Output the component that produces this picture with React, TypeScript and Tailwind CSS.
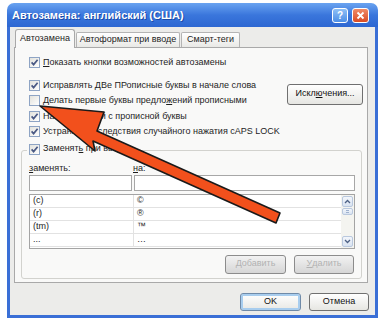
import React from 'react';

function Box({ checked = true }: { checked?: boolean }) {
  return (
    <span className="w-[11px] h-[11px] shrink-0 border border-[#8ea4c4] bg-linear-to-br from-[#e2e2dc] to-white flex items-center justify-center">
      {checked && (
        <svg width="9" height="9" viewBox="0 0 9 9">
          <path d="M1.6 4.4 L3.6 6.6 L7.6 1.8" fill="none" stroke="#4a5984" strokeWidth="1.7" />
        </svg>
      )}
    </span>
  );
}

function Row({ children, checked = true }: { children: React.ReactNode; checked?: boolean }) {
  return (
    <div className="h-[15.5px] flex items-center gap-[3px] pl-[8px]">
      <Box checked={checked} />
      <span className="whitespace-nowrap">{children}</span>
    </div>
  );
}

function Btn({ children, w, disabled = false, def = false, h = 'h-[19px]' }: { children: React.ReactNode; w: string; disabled?: boolean; def?: boolean; h?: string }) {
  return (
    <div
      className={`${w} ${h} shrink-0 rounded-[3px] border flex items-center justify-center ${
        disabled
          ? 'border-[#8c8c8c] bg-linear-to-b from-[#f2f2f2] to-[#d6d6d6] text-[#b2b2b2]'
          : def
          ? 'border-[#6f8aa8] bg-linear-to-b from-white to-[#e8e8e4] text-[#111] shadow-[inset_0_0_0_2px_#a8cdee]'
          : 'border-[#707070] bg-linear-to-b from-white to-[#e6e6e2] text-[#111]'
      }`}
    >
      {children}
    </div>
  );
}

const rows: [string, string][] = [
  ['(c)', '©'],
  ['(r)', '®'],
  ['(tm)', '™'],
  ['...', '…'],
];

function Arrow() {
  return (
    <svg className="absolute top-0 left-0 pointer-events-none" width="384" height="320" viewBox="0 0 384 320">
      <polygon
        points="40,106 104,112 97,131 280,213 276,223 93,141 95,151"
        fill="#f2501c"
        stroke="#1a1a1a"
        strokeWidth="1.6"
        strokeLinejoin="round"
      />
    </svg>
  );
}

export default function App() {
  return (
    <div className="w-[384px] h-[320px] bg-white relative overflow-hidden font-['Liberation_Sans',Arial,sans-serif] text-[9px] text-[#1e1e1e]">
      <div className="ml-[7px] mt-[3px] w-[371px] h-[315px] flex flex-col">
        {/* заголовок окна */}
        <div className="h-[24px] rounded-t-[7px] bg-linear-to-b from-[#6aa3f0] via-[#3a76dc] to-[#2d67d2] flex items-center justify-between pl-[5px] pr-[9px]">
          <span className="text-white font-bold text-[11px] [text-shadow:1px_1px_0_#1b4aa8]">Автозамена: английский (США)</span>
          <div className="flex items-center gap-[4px]">
            <div className="w-[16px] h-[15px] rounded-[3px] border border-white bg-linear-to-b from-[#8fc0f6] to-[#4c8ee6] flex items-center justify-center text-white font-bold text-[10px]">?</div>
            <div className="w-[17px] h-[15px] rounded-[3px] border border-white bg-linear-to-b from-[#f08a66] to-[#d94a22] flex items-center justify-center">
              <svg width="9" height="9" viewBox="0 0 9 9">
                <path d="M1.5 1.5 L7.5 7.5 M7.5 1.5 L1.5 7.5" stroke="white" strokeWidth="1.8" />
              </svg>
            </div>
          </div>
        </div>

        {/* тело диалога */}
        <div className="h-[291px] border-x-[3px] border-b-[3px] border-[#3a6fd6] bg-[#ececea] flex flex-col">
          {/* вкладки */}
          <div className="h-[20px] flex items-end pl-[5px]">
            <div className="w-[60px] h-[19px] -mb-[1px] relative z-10 rounded-t-[3px] border border-b-0 border-[#a9a9a9] bg-[#f9f9f8] flex items-center justify-center">
              Автозамена
            </div>
            <div className="ml-[1px] w-[104px] h-[15px] rounded-t-[2px] border border-b-0 border-[#b4b4b4] bg-linear-to-b from-white to-[#e9e9e6] flex items-center justify-center">
              Автоформат при вводе
            </div>
            <div className="ml-[1px] w-[59px] h-[15px] rounded-t-[2px] border border-b-0 border-[#b4b4b4] bg-linear-to-b from-white to-[#e9e9e6] flex items-center justify-center">
              Смарт-теги
            </div>
          </div>

          {/* панель */}
          <div className="ml-[4px] w-[354px] h-[236px] border border-[#a9a9a9] bg-[#f9f9f8] pl-[6px] pr-[4px] pt-[7px] flex flex-col">
            <Row>
              <u>П</u>оказать кнопки возможностей автозамены
            </Row>

            <div className="mt-[7px] flex">
              <div className="flex-1 flex flex-col">
                <Row>Исправлять ДВе ПРописные буквы в начале слова</Row>
                <Row checked={false}>
                  Делать первые буквы предло<u>ж</u>ений прописными
                </Row>
                <Row>Названия дней с прописной буквы</Row>
                <Row>Устранять последствия случайного нажатия cAPS LOCK</Row>
              </div>
              <div className="mt-[6px]">
                <Btn w="w-[76px]" h="h-[21px]">
                  Искл<u>ю</u>чения...
                </Btn>
              </div>
            </div>

            {/* группа замены */}
            <div className="mt-[10px] mr-[1px] h-[129px] rounded-[3px] border border-[#d2d2ce] pl-[7px] pr-[6px] flex flex-col">
              <div className="-mt-[8px] -ml-[2px] self-start h-[13px] px-[2px] bg-[#f9f9f8] flex items-center gap-[3px]">
                <Box />
                <span>
                  Заменят<u>ь</u> при вводе
                </span>
              </div>

              <div className="mt-[7px] grid grid-cols-[103px_221px] gap-x-[2px]">
                <div className="h-[12px] flex items-center">
                  <u>з</u>аменять:
                </div>
                <div className="h-[12px] flex items-center -ml-[1px]">
                  <u>н</u>а:
                </div>
                <div className="h-[16px] border border-[#a7a7a7] bg-white" />
                <div className="h-[16px] border border-[#a7a7a7] bg-white" />
              </div>

              <div className="mt-[3px] h-[55px] border border-[#a4a4a4] bg-white flex">
                <div className="flex-1 flex flex-col">
                  {rows.map(([a, b]) => (
                    <div key={a} className="h-[13px] flex border-b border-[#e2e2e2]">
                      <div className="w-[104px] pl-[3px] border-r border-[#e2e2e2] flex items-center">{a}</div>
                      <div className="pl-[3px] flex items-center">{b}</div>
                    </div>
                  ))}
                </div>
                {/* полоса прокрутки */}
                <div className="w-[13px] p-[1px] flex flex-col bg-[#f4f4f0]">
                  <div className="h-[11px] rounded-[2px] border border-[#b9c8de] bg-linear-to-b from-[#f3f6fb] to-[#d9e3f1] flex items-center justify-center">
                    <svg width="7" height="5" viewBox="0 0 7 5">
                      <path d="M1 4 L3.5 1.5 L6 4" fill="none" stroke="#4d6185" strokeWidth="1.3" />
                    </svg>
                  </div>
                  <div className="mt-[1px] h-[7px] rounded-[2px] border border-[#b9c8de] bg-linear-to-b from-[#f3f6fb] to-[#d9e3f1] flex flex-col justify-center gap-[1px] px-[3px]">
                    <div className="h-px bg-[#9fb2cf]" />
                    <div className="h-px bg-[#9fb2cf]" />
                  </div>
                  <div className="flex-1" />
                  <div className="h-[11px] rounded-[2px] border border-[#b9c8de] bg-linear-to-b from-[#f3f6fb] to-[#d9e3f1] flex items-center justify-center">
                    <svg width="7" height="5" viewBox="0 0 7 5">
                      <path d="M1 1 L3.5 3.5 L6 1" fill="none" stroke="#4d6185" strokeWidth="1.3" />
                    </svg>
                  </div>
                </div>
              </div>

              <div className="mt-[6px] flex justify-end gap-[8px] pr-[1px]">
                <Btn w="w-[61px]" disabled>
                  <u>Д</u>обавить
                </Btn>
                <Btn w="w-[60px]" disabled>
                  <u>У</u>далить
                </Btn>
              </div>
            </div>
          </div>

          {/* кнопки диалога */}
          <div className="mt-[10px] flex justify-end gap-[8px] pr-[6px]">
            <Btn w="w-[61px]" h="h-[18px]" def>
              OK
            </Btn>
            <Btn w="w-[60px]" h="h-[18px]">
              Отмена
            </Btn>
          </div>
        </div>
      </div>
      <Arrow />
    </div>
  );
}
